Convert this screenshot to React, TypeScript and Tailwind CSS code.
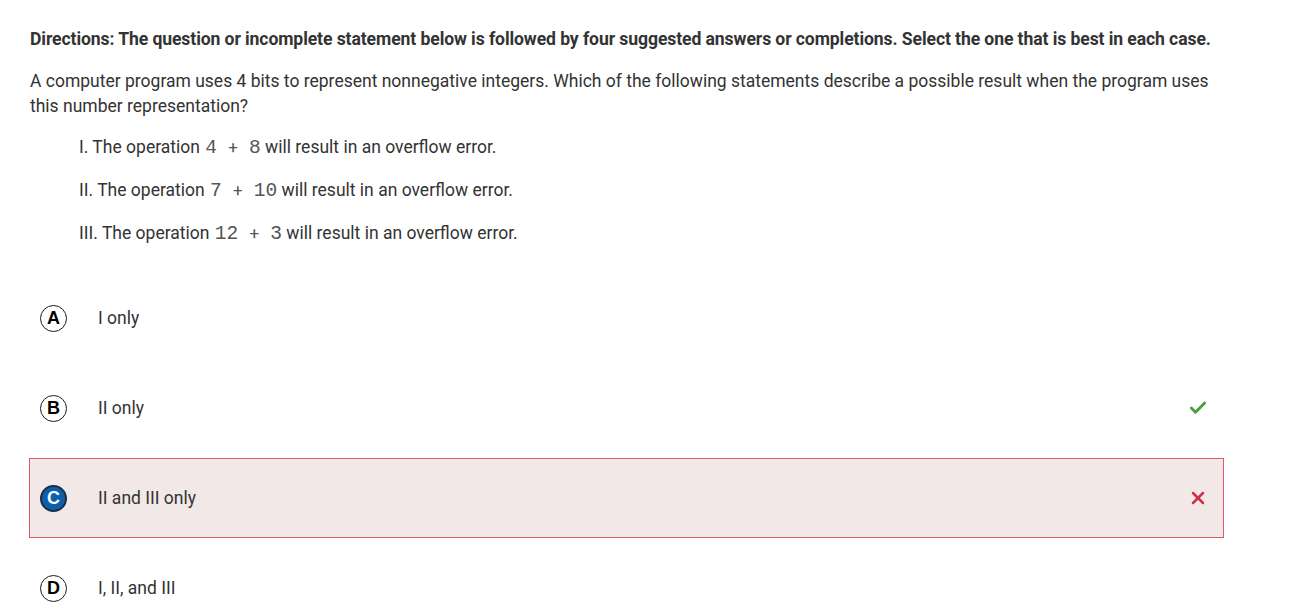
import { Check, X } from "lucide-react";

const statements = [
  { num: "I.", a: "4", b: "8" },
  { num: "II.", a: "7", b: "10" },
  { num: "III.", a: "12", b: "3" },
];

const options = [
  { letter: "A", text: "I only", state: "none" },
  { letter: "B", text: "II only", state: "correct" },
  { letter: "C", text: "II and III only", state: "wrong" },
  { letter: "D", text: "I, II, and III", state: "none" },
];

const App = () => {
  return (
    <div className="min-h-screen bg-white pl-[30px] pr-[80px] pt-[28px] font-['Roboto',sans-serif] text-[#333]">
      <p className="whitespace-nowrap text-[17.6px] font-bold leading-[22px] tracking-[-0.1px]">
        Directions: The question or incomplete statement below is followed by
        four suggested answers or completions. Select the one that is best in
        each case.
      </p>

      <p className="mt-[19px] w-[1195px] text-[17.5px] leading-[25px]">
        A computer program uses 4 bits to represent nonnegative integers. Which
        of the following statements describe a possible result when the
        program uses this number representation?
      </p>

      <div className="mt-[16px] flex flex-col gap-[18px] pl-[49px] text-[17.5px] leading-[24px]">
        {statements.map((s) => (
          <p key={s.num}>
            {s.num} The operation{" "}
            <span className="ml-px font-['Liberation_Mono',monospace] text-[19.5px] leading-[24px] text-[#555]">
              {s.a}
              <span className="mx-[7px] font-['Roboto',sans-serif] text-[17px]">
                {" "}+{" "}
              </span>
              {s.b}
            </span>{" "}
            will result in an overflow error.
          </p>
        ))}
      </div>

      <div className="-ml-px mt-[32px] flex w-[1195px] flex-col gap-[10px]">
        {options.map((o) => (
          <div
            key={o.letter}
            className={`flex h-[80px] items-center border ${
              o.state === "wrong"
                ? "border-[#e0596b] bg-[#f2e8e8]"
                : "border-transparent"
            }`}
          >
            {o.state === "wrong" ? (
              <span className="ml-[10px] flex h-[27px] w-[27px] items-center justify-center rounded-full border-2 border-[#1d2d44] bg-[#0b5fad] font-['Liberation_Sans',sans-serif] text-[18px] font-bold text-white">
                {o.letter}
              </span>
            ) : (
              <span className="ml-[10px] flex h-[27px] w-[27px] items-center justify-center rounded-full border-[1.6px] border-[#1a1a1a] font-['Liberation_Sans',sans-serif] text-[18px] font-bold text-[#000]">
                {o.letter}
              </span>
            )}
            <span className="ml-[31px] text-[17.5px]">{o.text}</span>
            <span className="ml-auto mr-[15px]">
              {o.state === "correct" && (
                <Check className="h-[20px] w-[20px] text-[#4b9f3c]" strokeWidth={3.5} />
              )}
              {o.state === "wrong" && (
                <X className="h-[20px] w-[20px] text-[#cf304a]" strokeWidth={3} />
              )}
            </span>
          </div>
        ))}
      </div>
    </div>
  );
};

export default App;
